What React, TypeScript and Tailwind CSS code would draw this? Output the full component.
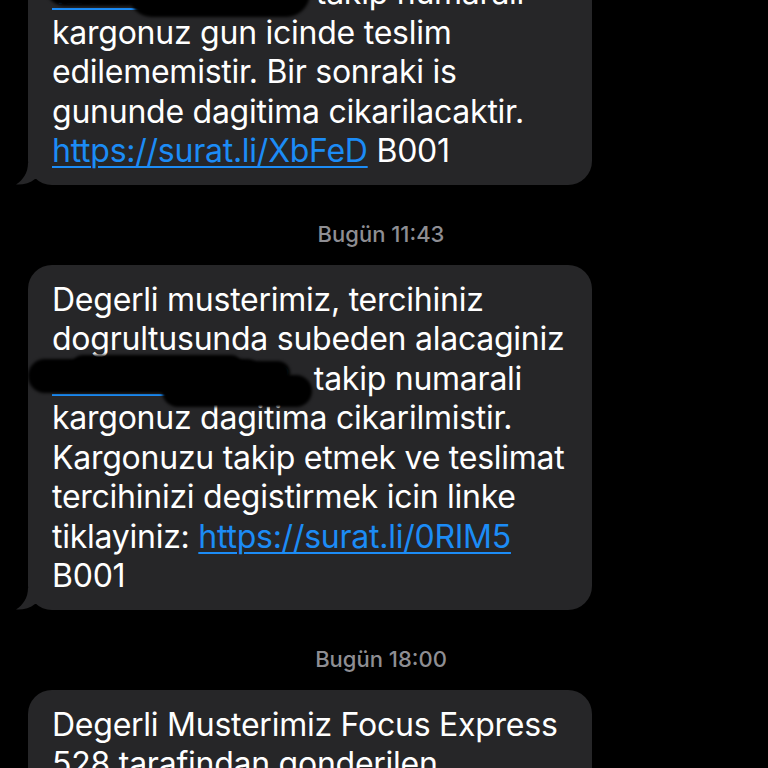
import React from 'react';

const font = { fontFamily: 'Inter, "Noto Sans", sans-serif' };

function Link({ children }: { children: React.ReactNode }) {
    return <span className="text-[#1c8cf6] underline decoration-[2px] underline-offset-[4px]">{children}</span>;
}

function Tail() {
    return (
        <svg className="absolute left-[-12px] bottom-0" width="26" height="22" viewBox="0 0 26 22">
            <path d="M12 0 C12 10 7 17 0 21.5 C7 22 14 20 19 16 L26 16 L26 0 Z" fill="#262628" />
        </svg>
    );
}

function Redaction({ className }: { className: string }) {
    return <div className={`absolute bg-black rounded-full blur-[1.5px] ${className}`} />;
}

function Bubble({ children, className = '' }: { children: React.ReactNode; className?: string }) {
    return (
        <div className={`relative ml-[28px] w-[564px] rounded-[24px] bg-[#262628] pl-[24px] pt-[15px] pb-[14px] ${className}`}>
            <div className="text-[32px] leading-[39.5px] text-white tracking-[-0.25px]">{children}</div>
            <Tail />
        </div>
    );
}

function Stamp({ children }: { children: React.ReactNode }) {
    return (
        <div className="w-full pr-[6px] text-center text-[22px] leading-[24px] font-medium text-[#8e8e93] mt-[37px] mb-[19px]">
            {children}
        </div>
    );
}

export default function App() {
    return (
        <div className="w-[768px] h-[768px] overflow-hidden bg-black" style={font}>
            <div className="flex flex-col">
                <Bubble className="mt-[-42px]">
                    <div className="relative whitespace-nowrap">
                        <span className="inline-block w-[255px] overflow-hidden align-bottom">
                            <Link>1234567890123</Link>
                        </span>
                        {' '}takip numarali
                        <Redaction className="left-[76px] top-[-4px] w-[182px] h-[48px]" />
                        <Redaction className="left-[-6px] top-[-4px] w-[100px] h-[37px]" />
                    </div>
                    <div>kargonuz gun icinde teslim</div>
                    <div>edilememistir. Bir sonraki is</div>
                    <div>gununde dagitima cikarilacaktir.</div>
                    <div className="whitespace-nowrap">
                        <Link>https://surat.li/XbFeD</Link> B001
                    </div>
                </Bubble>

                <Stamp>Bugün 11:43</Stamp>

                <Bubble>
                    <div>Degerli musterimiz, tercihiniz</div>
                    <div>dogrultusunda subeden alacaginiz</div>
                    <div className="relative whitespace-nowrap">
                        <span className="inline-block w-[253px] overflow-hidden align-bottom">
                            <Link>1234567890123</Link>
                        </span>
                        {' '}takip numarali
                        <Redaction className="left-[-24px] top-[0px] w-[236px] h-[34px]" />
                        <Redaction className="left-[110px] top-[16px] w-[150px] h-[32px]" />
                        <Redaction className="left-[20px] top-[-4px] w-[170px] h-[22px]" />
                        <Redaction className="left-[196px] top-[2px] w-[42px] h-[24px]" />
                    </div>
                    <div>kargonuz dagitima cikarilmistir.</div>
                    <div>Kargonuzu takip etmek ve teslimat</div>
                    <div>tercihinizi degistirmek icin linke</div>
                    <div className="whitespace-nowrap">
                        tiklayiniz: <Link>https://surat.li/0RIM5</Link>
                    </div>
                    <div>B001</div>
                </Bubble>

                <Stamp>Bugün 18:00</Stamp>

                <Bubble>
                    <div>Degerli Musterimiz Focus Express</div>
                    <div>528 tarafindan gonderilen</div>
                    <div>kargonuz</div>
                </Bubble>
            </div>
        </div>
    );
}
